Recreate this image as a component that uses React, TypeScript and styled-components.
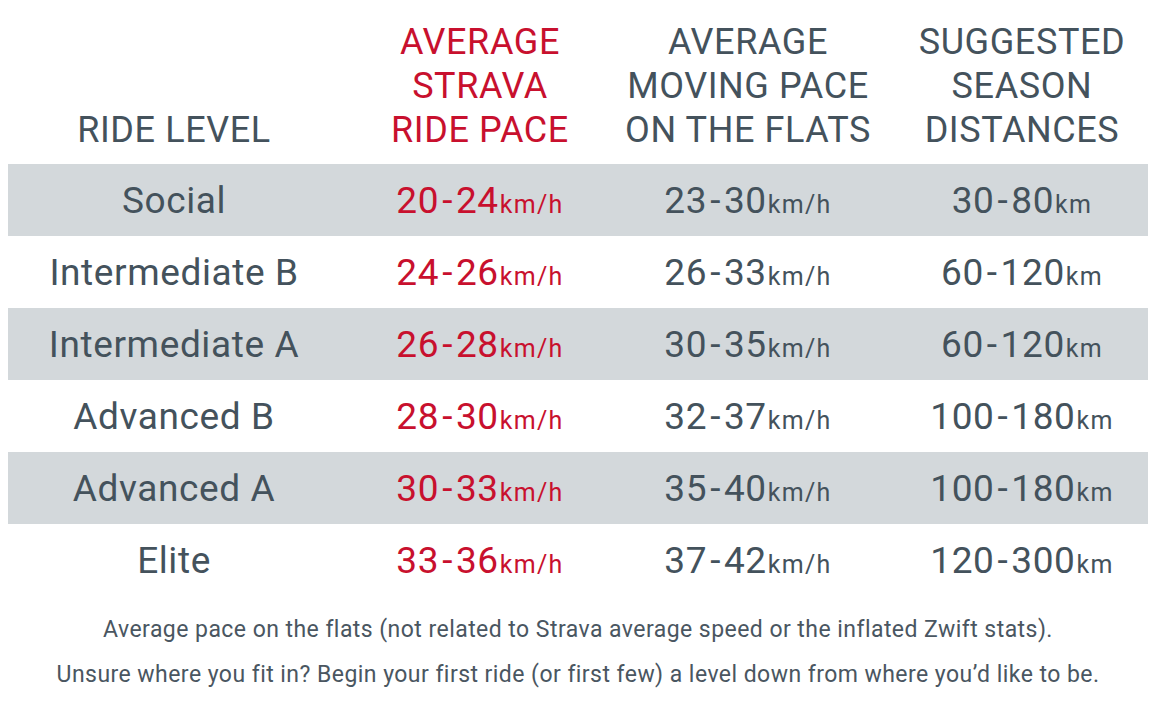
import React from "react";
import styled, { createGlobalStyle } from "styled-components";

const GlobalStyle = createGlobalStyle`
  body {
    margin: 8px;
    background: #ffffff;
    font-family: Roboto, "Liberation Sans", sans-serif;
    color: #44525c;
  }
`;

const Table = styled.div`
  display: grid;
  grid-template-columns: 332px 280px 256px 1fr;
`;

const HeadCell = styled.div<{ $red?: boolean; $shift?: boolean }>`
  display: flex;
  align-items: flex-end;
  justify-content: center;
  text-align: center;
  height: 156px;
  padding-bottom: 12px;
  box-sizing: border-box;
  padding-left: ${({ $shift }) => ($shift ? "20px" : "0")};
  font-size: 36px;
  line-height: 44px;
  letter-spacing: 0.6px;
  color: ${({ $red }) => ($red ? "#c8102e" : "#44525c")};
`;

const Cell = styled.div<{ $red?: boolean; $striped?: boolean; $shift?: boolean }>`
  display: flex;
  align-items: center;
  justify-content: center;
  height: 72px;
  padding-left: ${({ $shift }) => ($shift ? "20px" : "0")};
  background: ${({ $striped }) => ($striped ? "#d3d8db" : "transparent")};
  font-size: 37px;
  letter-spacing: 0.6px;
  color: ${({ $red }) => ($red ? "#c8102e" : "#44525c")};
`;

const Unit = styled.span`
  font-size: 25px;
  letter-spacing: 1.3px;
  margin-left: 1px;
`;

const Value = styled.span`
  display: inline-flex;
  align-items: baseline;
`;

const Dash = styled.span`
  margin: 0 3px;
`;

const Notes = styled.div`
  display: flex;
  flex-direction: column;
  align-items: center;
  gap: 18px;
  padding-top: 20px;
  font-size: 23px;
  line-height: 27px;
  color: #4a5661;
  letter-spacing: 0.45px;
`;

const rows = [
  { level: "Social", strava: ["20", "24"], flats: ["23", "30"], dist: ["30", "80"] },
  { level: "Intermediate B", strava: ["24", "26"], flats: ["26", "33"], dist: ["60", "120"] },
  { level: "Intermediate A", strava: ["26", "28"], flats: ["30", "35"], dist: ["60", "120"] },
  { level: "Advanced B", strava: ["28", "30"], flats: ["32", "37"], dist: ["100", "180"] },
  { level: "Advanced A", strava: ["30", "33"], flats: ["35", "40"], dist: ["100", "180"] },
  { level: "Elite", strava: ["33", "36"], flats: ["37", "42"], dist: ["120", "300"] },
];

const Range = ({ r, unit }: { r: string[]; unit: string }) => (
  <Value>
    {r[0]}
    <Dash>-</Dash>
    {r[1]}
    <Unit>{unit}</Unit>
  </Value>
);

export default function App() {
  return (
    <>
      <GlobalStyle />
      <Table>
        <HeadCell>RIDE LEVEL</HeadCell>
        <HeadCell $red>
          AVERAGE
          <br />
          STRAVA
          <br />
          RIDE PACE
        </HeadCell>
        <HeadCell>
          AVERAGE
          <br />
          MOVING PACE
          <br />
          ON THE FLATS
        </HeadCell>
        <HeadCell $shift>
          SUGGESTED
          <br />
          SEASON
          <br />
          DISTANCES
        </HeadCell>
        {rows.map((r, i) => {
          const striped = i % 2 === 0;
          return (
            <React.Fragment key={r.level}>
              <Cell $striped={striped}>{r.level}</Cell>
              <Cell $striped={striped} $red>
                <Range r={r.strava} unit="km/h" />
              </Cell>
              <Cell $striped={striped}>
                <Range r={r.flats} unit="km/h" />
              </Cell>
              <Cell $striped={striped} $shift>
                <Range r={r.dist} unit="km" />
              </Cell>
            </React.Fragment>
          );
        })}
      </Table>
      <Notes>
        <div>Average pace on the flats (not related to Strava average speed or the inflated Zwift stats).</div>
        <div>Unsure where you fit in? Begin your first ride (or first few) a level down from where you’d like to be.</div>
      </Notes>
    </>
  );
}
